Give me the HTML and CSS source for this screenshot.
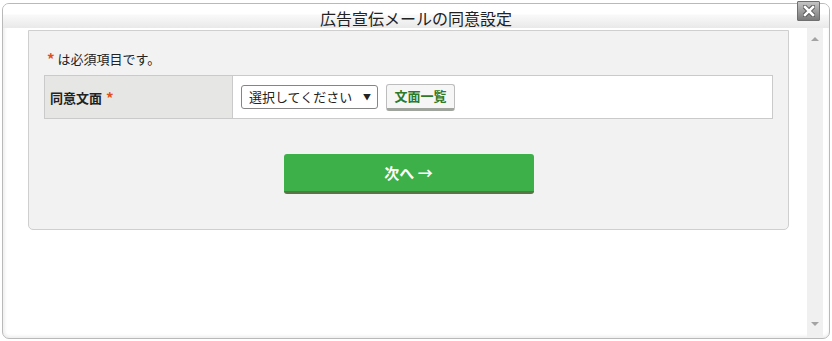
FILE: index.html
```html
<!DOCTYPE html>
<html lang="ja">
<head>
    <meta charset="UTF-8">
    <title>広告宣伝メールの同意設定</title>
    <link rel="stylesheet" href="styles.css">
</head>
<body>
    <div class="dialog">
        <div class="dialog-title">広告宣伝メールの同意設定</div>
        <button class="btn-close" aria-label="閉じる">
            <svg width="12" height="12" viewBox="0 0 12 12">
                <path d="M2 2 L10 10 M10 2 L2 10" stroke="#555" stroke-width="4.5" stroke-linecap="square"/>
                <path d="M2 2 L10 10 M10 2 L2 10" stroke="#fff" stroke-width="2.6" stroke-linecap="square"/>
            </svg>
        </button>
        <div class="dialog-body">
            <div class="dialog-main">
                <div class="panel">
                    <p class="note"><span class="req">*</span> は必須項目です。</p>
                    <div class="form-row">
                        <div class="form-label">同意文面 <span class="req">*</span></div>
                        <div class="form-value">
                            <div class="fake-select">選択してください <span class="caret">▼</span></div>
                            <button class="btn-sub">文面一覧</button>
                        </div>
                    </div>
                    <div class="actions">
                        <button class="btn-next">次へ →</button>
                    </div>
                </div>
            </div>
            <div class="scrollbar">
                <span class="arrow up"></span>
                <span class="arrow down"></span>
            </div>
        </div>
    </div>
</body>
</html>
```

FILE: styles.css
```css
body {
    margin: 0;
    padding: 0;
    font-family: "Noto Sans CJK JP", "Noto Sans", sans-serif;
    background-color: #fff;
    color: #222;
}
.dialog {
    position: relative;
    margin: 3px 2px;
    width: 828px;
    height: 336px;
    box-sizing: border-box;
    border: 1px solid #b9b9b9;
    border-radius: 7px;
    box-shadow: inset 2px 0 3px #f0f0f0, inset 0 -2px 3px #f0f0f0;
    display: flex;
    flex-direction: column;
}
.dialog-title {
    height: 24px;
    padding-top: 3px;
    box-sizing: border-box;
    font-size: 16px;
    line-height: 22px;
    text-align: center;
    color: #222;
    background: linear-gradient(#fff 0, #fff 10px, #f9f9f9 11px, #e9e9e9 100%);
    border-radius: 6px 6px 0 0;
}
.btn-close {
    position: absolute;
    top: -3px;
    right: 9px;
    width: 23px;
    height: 20px;
    padding: 0;
    border: 1px solid #6f6f6f;
    border-radius: 1px;
    background: linear-gradient(#c4c4c4, #7a7a7a);
    display: flex;
    align-items: center;
    justify-content: center;
}
.dialog-body {
    flex: 1;
    display: flex;
}
.dialog-main {
    flex: 1;
}
.scrollbar {
    width: 16px;
    margin-right: 6px;
    background-color: #f0f0f0;
    display: flex;
    flex-direction: column;
    justify-content: space-between;
    align-items: center;
    padding: 9px 0 12px;
}
.arrow {
    width: 0;
    height: 0;
    border-left: 4px solid transparent;
    border-right: 4px solid transparent;
}
.arrow.up {
    border-bottom: 4px solid #a3a3a3;
}
.arrow.down {
    border-top: 4px solid #a3a3a3;
}
.panel {
    margin: 2px 18px 0 25px;
    height: 200px;
    box-sizing: border-box;
    padding: 19px 15px 0;
    background-color: #f2f2f2;
    border: 1px solid #cfcfcf;
    border-radius: 0 0 5px 5px;
}
.note {
    margin: 0 0 7px 3px;
    height: 18px;
    font-size: 13px;
    line-height: 18px;
}
.req {
    color: #e0501c;
    font-weight: bold;
    font-size: 15px;
    line-height: 0;
    position: relative;
    top: 1px;
}
.form-row {
    display: flex;
    height: 44px;
    box-sizing: border-box;
    border: 1px solid #cacaca;
    background-color: #fff;
}
.form-label {
    width: 188px;
    padding-left: 5px;
    box-sizing: border-box;
    background-color: #e6e7e5;
    border-right: 1px solid #cacaca;
    font-size: 13px;
    font-weight: bold;
    display: flex;
    align-items: center;
    gap: 4px;
}
.form-value {
    flex: 1;
    display: flex;
    align-items: center;
    gap: 8px;
    padding-left: 8px;
}
.fake-select {
    width: 137px;
    height: 24px;
    box-sizing: border-box;
    border: 1px solid #858585;
    border-radius: 3px;
    padding: 0 6px 0 7px;
    font-size: 13px;
    line-height: 22px;
    display: flex;
    justify-content: space-between;
    background-color: #fff;
}
.caret {
    font-size: 8px;
}
.btn-sub {
    width: 69px;
    height: 27px;
    padding: 0 0 2px;
    font-family: inherit;
    font-size: 13px;
    font-weight: bold;
    color: #2f7a26;
    background-color: #f6f6f6;
    border: 1px solid #bdbdbd;
    border-bottom: 3px solid #9fa59c;
    border-radius: 3px;
}
.actions {
    display: flex;
    justify-content: center;
    margin-top: 35px;
}
.btn-next {
    width: 250px;
    height: 40px;
    padding: 0;
    font-family: inherit;
    font-size: 15px;
    font-weight: bold;
    color: #fff;
    background-color: #3db049;
    border: none;
    border-bottom: 3px solid #577545;
    border-radius: 3px;
}
```
